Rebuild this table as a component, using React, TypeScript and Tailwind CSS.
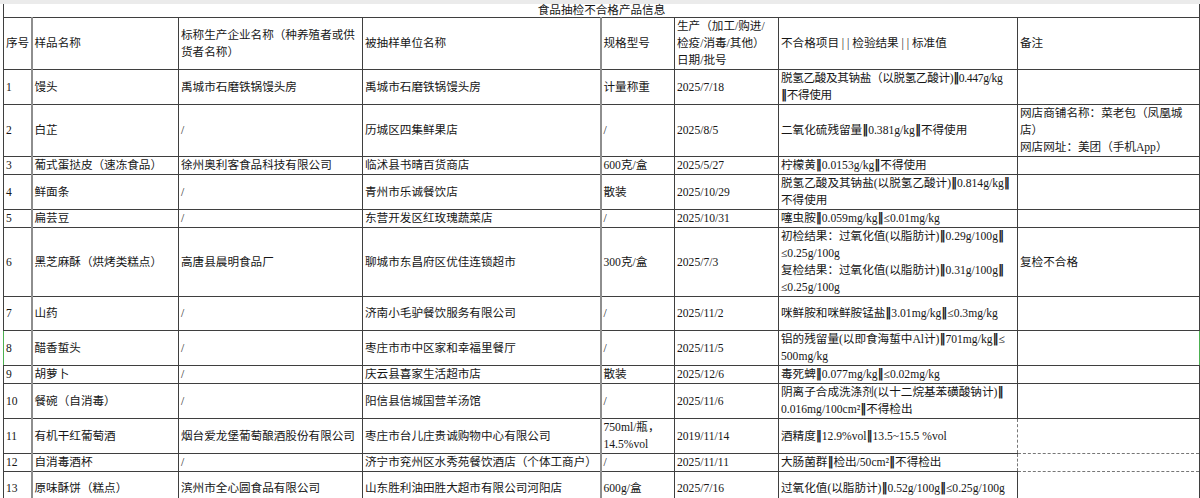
type Row = {
  h: number;
  cells: React.ReactNode[];
};

// render the double bar in a heavier face, like the sheet does
function T({ s }: { s: string }) {
  const parts = s.split("‖");
  return (
    <>
      {parts.map((p, i) => (
        <span key={i}>
          {i > 0 && <span className="font-['DejaVu_Sans'] font-bold text-[12px]">‖</span>}
          {p}
        </span>
      ))}
    </>
  );
}

const L = (...lines: string[]) => (
  <>
    {lines.map((line, i) => (
      <div key={i}>
        <T s={line} />
      </div>
    ))}
  </>
);

const widths = [28, 147, 184, 238, 74, 104, 239, 182];

const rows: Row[] = [
  { h: 34, cells: ["1", "馒头", "禹城市石磨铁锅馒头房", "禹城市石磨铁锅馒头房", "计量称重", "2025/7/18", <div className="tracking-[-0.35px]">{L("脱氢乙酸及其钠盐（以脱氢乙酸计)‖0.447g/kg", "‖不得使用")}</div>, ""] },
  { h: 51, cells: ["2", "白芷", "/", "历城区四集鲜果店", "/", "2025/8/5", L("二氧化硫残留量‖0.381g/kg‖不得使用"), L("网店商铺名称：菜老包（凤凰城", "店）", "网店网址：美团（手机App）")] },
  { h: 18, cells: ["3", "葡式蛋挞皮（速冻食品）", "徐州奥利客食品科技有限公司", "临沭县书晴百货商店", "600克/盒", "2025/5/27", L("柠檬黄‖0.0153g/kg‖不得使用"), ""] },
  { h: 34, cells: ["4", "鲜面条", "/", "青州市乐诚餐饮店", "散装", "2025/10/29", L("脱氢乙酸及其钠盐(以脱氢乙酸计)‖0.814g/kg‖", "不得使用"), ""] },
  { h: 17, cells: ["5", "扁芸豆", "/", "东营开发区红玫瑰蔬菜店", "/", "2025/10/31", L("噻虫胺‖0.059mg/kg‖≤0.01mg/kg"), ""] },
  { h: 68, cells: ["6", "黑芝麻酥（烘烤类糕点）", "高唐县晨明食品厂", "聊城市东昌府区优佳连锁超市", "300克/盒", "2025/7/3", L("初检结果：过氧化值(以脂肪计)‖0.29g/100g‖", "≤0.25g/100g", "复检结果：过氧化值(以脂肪计)‖0.31g/100g‖", "≤0.25g/100g"), "复检不合格"] },
  { h: 34, cells: ["7", "山药", "/", "济南小毛驴餐饮服务有限公司", "/", "2025/11/2", L("咪鲜胺和咪鲜胺锰盐‖3.01mg/kg‖≤0.3mg/kg"), ""] },
  { h: 34, cells: ["8", "醋香蜇头", "/", "枣庄市市中区家和幸福里餐厅", "/", "2025/11/5", L("铝的残留量(以即食海蜇中Al计)‖701mg/kg‖≤", "500mg/kg"), ""] },
  { h: 17, cells: ["9", "胡萝卜", "/", "庆云县喜家生活超市店", "散装", "2025/12/6", L("毒死蜱‖0.077mg/kg‖≤0.02mg/kg"), ""] },
  { h: 35, cells: ["10", "餐碗（自消毒）", "/", "阳信县信城国营羊汤馆", "/", "2025/11/6", L("阴离子合成洗涤剂(以十二烷基苯磺酸钠计)‖", "0.016mg/100cm²‖不得检出"), ""] },
  { h: 34, cells: ["11", "有机干红葡萄酒", "烟台爱龙堡葡萄酿酒股份有限公司", "枣庄市台儿庄贵诚购物中心有限公司", L("750ml/瓶，", "14.5%vol"), "2019/11/14", L("酒精度‖12.9%vol‖13.5~15.5 %vol"), ""] },
  { h: 17, cells: ["12", "自消毒酒杯", "/", "济宁市兖州区水秀苑餐饮酒店（个体工商户）", "/", "2025/11/11", L("大肠菌群‖检出/50cm²‖不得检出"), ""] },
  { h: 34, cells: ["13", "原味酥饼（糕点）", "滨州市全心圆食品有限公司", "山东胜利油田胜大超市有限公司河阳店", "600g/盒", "2025/7/16", L("过氧化值(以脂肪计)‖0.52g/100g‖≤0.25g/100g"), ""] },
];

function cellClass(col: number, rowIdx: number) {
  const base = "border border-[#3f3f3f] px-[2px] align-middle overflow-hidden whitespace-nowrap";
  let extra = "";
  if (col === 0 || col === 3) extra += " border-r-2 border-r-[#8e8e8e]";
  if (rowIdx === 7 && col === 0) extra += " border-l-[#4caf50]";
  if (rowIdx === 7 && col === 7) extra += " border-r-[#4caf50]";
  if ((rowIdx === 10 || rowIdx === 11) && col === 6) extra += " [border-right-style:dashed] border-r-[#777]";
  if ((rowIdx === 10 || rowIdx === 11) && col === 7) extra += " border-dashed border-[#777] border-r-[#3f3f3f] [border-right-style:solid]";
  if (rowIdx === 12 && col === 7) extra += " [border-top-style:dashed] border-t-[#777]";
  if (rowIdx === 12) extra += " border-b-2 border-b-[#9a9a9a]";
  return base + extra;
}

export default function App() {
  return (
    <div className="h-[498px] w-[1200px] overflow-hidden bg-white text-[#161616] font-['Liberation_Serif','Noto_Sans_CJK_SC',serif] text-[11.6px] leading-[17px]">
      <div className="h-[4px] bg-[#ebebeb]" />
      <table className="ml-[3px] w-[1196px] table-fixed border-collapse">
        <colgroup>
          {widths.map((w, i) => (
            <col key={i} style={{ width: w }} />
          ))}
        </colgroup>
        <tbody>
          <tr>
            <td colSpan={8} className="h-[13px] border-x border-b border-[#3f3f3f] p-0 text-center leading-[13px]">
              食品抽检不合格产品信息
            </td>
          </tr>
          <tr>
            {[
              "序号",
              "样品名称",
              L("标称生产企业名称（种养殖者或供", "货者名称）"),
              "被抽样单位名称",
              "规格型号",
              L("生产（加工/购进/", "检疫/消毒/其他）", "日期/批号"),
              "不合格项目 | | 检验结果 | | 标准值",
              "备注",
            ].map((c, i) => (
              <td key={i} className={cellClass(i, -1) + " h-[52px]"}>
                {c}
              </td>
            ))}
          </tr>
          {rows.map((r, ri) => (
            <tr key={ri}>
              {r.cells.map((c, ci) => (
                <td key={ci} className={cellClass(ci, ri)} style={{ height: r.h }}>
                  {c}
                </td>
              ))}
            </tr>
          ))}
        </tbody>
      </table>
    </div>
  );
}
